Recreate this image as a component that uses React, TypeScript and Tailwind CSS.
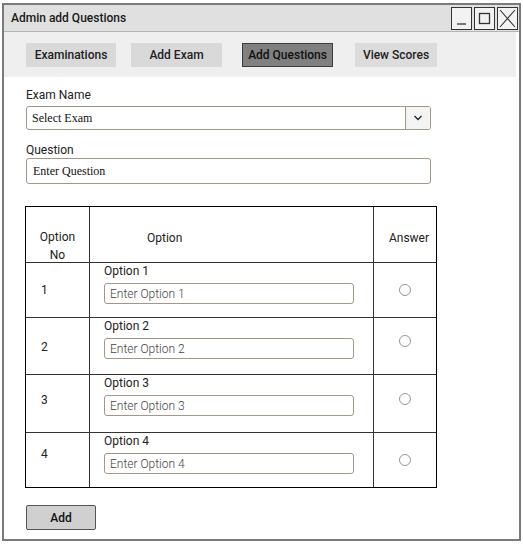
import React from "react";

const rows = [
  { n: "1", h: "h-[55px]", numPt: "pt-[19px]", radioPt: "pt-[21px]" },
  { n: "2", h: "h-[57px]", numPt: "pt-[21px]", radioPt: "pt-[17px]" },
  { n: "3", h: "h-[58px]", numPt: "pt-[17px]", radioPt: "pt-[18px]" },
  { n: "4", h: "h-[54px]", numPt: "pt-[13px]", radioPt: "pt-[21px]" },
];

function WinButton({ children }: { children: React.ReactNode }) {
  return (
    <div className="w-[21px] h-[23px] border border-[#333] bg-[#f2f2f2] flex items-center justify-center">
      {children}
    </div>
  );
}

export default function App() {
  return (
    <div className="w-[523px] h-[545px] bg-white pl-[2px] pt-[3px]" style={{ fontFamily: "Roboto, 'Noto Sans', sans-serif" }}>
      <div className="w-[519px] h-[538px] border-2 border-[#7a7a7a] flex flex-col bg-white">
        {/* Title bar */}
        <div className="h-[27px] bg-[#e0e0e0] border-b border-[#b5b5b5] flex items-center justify-between pl-[7px] pr-[1px]">
          <span className="text-[12px] font-medium text-[#1a1a1a]">Admin add Questions</span>
          <div className="flex gap-[2px]">
            <WinButton>
              <svg width="13" height="15" viewBox="0 0 13 15"><line x1="2" y1="13" x2="11" y2="13" stroke="#333" strokeWidth="1.3" /></svg>
            </WinButton>
            <WinButton>
              <svg width="13" height="15" viewBox="0 0 13 15"><rect x="1.5" y="2.5" width="10" height="10" fill="none" stroke="#333" strokeWidth="1.3" /></svg>
            </WinButton>
            <WinButton>
              <svg width="17" height="19" viewBox="0 0 17 19"><path d="M1 1 L16 18 M16 1 L1 18" stroke="#333" strokeWidth="1.1" /></svg>
            </WinButton>
          </div>
        </div>
        {/* Nav */}
        <div className="h-[45px] bg-[#efefef] mr-[3px] flex items-start pl-[22px] pt-[11px]">
          <div className="w-[90px] h-[24px] bg-[#d9d9d9] flex items-center justify-center text-[12px] font-medium text-[#222]">Examinations</div>
          <div className="ml-[15px] w-[91px] h-[24px] bg-[#d9d9d9] flex items-center justify-center text-[12px] font-medium text-[#222]">Add Exam</div>
          <div className="ml-[20px] w-[91px] h-[24px] bg-[#808080] border border-[#3c3c3c] flex items-center justify-center text-[12px] font-medium text-[#111]">Add Questions</div>
          <div className="ml-[22px] w-[82px] h-[24px] bg-[#dcdcdc] flex items-center justify-center text-[12px] font-medium text-[#222]">View Scores</div>
        </div>
        {/* Form */}
        <div className="pl-[22px] pt-[10px] flex flex-col">
          <div className="text-[12px] leading-[16px] text-[#222]">Exam Name</div>
          <div className="mt-[3px] w-[405px] h-[24px] border border-[#a3978a] rounded-[3px] flex overflow-hidden">
            <div className="flex-1 flex items-center pl-[5px] text-[12px] text-[#111]" style={{ fontFamily: "'Liberation Serif', serif" }}>Select Exam</div>
            <div className="w-[25px] border-l border-[#a3978a] bg-[#f4f4f4] flex items-center justify-center">
              <svg width="10" height="6" viewBox="0 0 10 6"><path d="M1.5 1 L5 4.5 L8.5 1" fill="none" stroke="#222" strokeWidth="1.3" /></svg>
            </div>
          </div>
          <div className="mt-[12px] text-[12px] leading-[16px] text-[#222]">Question</div>
          <div className="mt-[0px] w-[405px] h-[26px] border border-[#a3978a] rounded-[3px] flex items-center pl-[6px] text-[12px] text-[#111]" style={{ fontFamily: "'Liberation Serif', serif" }}>Enter Question</div>

          {/* Table */}
          <div className="mt-[22px] -ml-[1px] w-[412px] border border-black flex flex-col">
            <div className="h-[56px] flex border-b border-[#333]">
              <div className="w-[64px] border-r border-[#333] flex flex-col items-center pt-[21px] text-[12px] leading-[18px] text-[#222]">
                <span>Option</span>
                <span>No</span>
              </div>
              <div className="w-[284px] border-r border-[#333] flex items-center pl-[57px] pt-[6px] text-[12px] text-[#222]">Option</div>
              <div className="flex-1 flex items-center justify-center pl-[8px] pt-[6px] text-[12px] text-[#222]">Answer</div>
            </div>
            {rows.map((r, i) => (
              <div key={r.n} className={`${r.h} flex ${i < rows.length - 1 ? "border-b border-[#333]" : ""}`}>
                <div className={`w-[64px] border-r border-[#333] pl-[15px] ${r.numPt} text-[12px] leading-[16px] text-[#222]`}>{r.n}</div>
                <div className="w-[284px] border-r border-[#333] pl-[14px] pt-[0px] flex flex-col">
                  <div className="text-[12px] leading-[16px] text-[#222]">Option {r.n}</div>
                  <div className="mt-[4px] w-[250px] h-[21px] border border-[#a3978a] rounded-[3px] flex items-center pl-[5px] text-[12px] font-light text-[#444]">Enter Option {r.n}</div>
                </div>
                <div className={`flex-1 flex justify-center ${r.radioPt}`}>
                  <div className="w-[12px] h-[12px] rounded-full border border-[#9a948e] bg-white"></div>
                </div>
              </div>
            ))}
          </div>

          <div className="mt-[17px] w-[70px] h-[25px] bg-[#d0d0d0] border border-[#555] rounded-[2px] flex items-center justify-center text-[12px] font-medium text-[#111]">Add</div>
        </div>
      </div>
    </div>
  );
}
